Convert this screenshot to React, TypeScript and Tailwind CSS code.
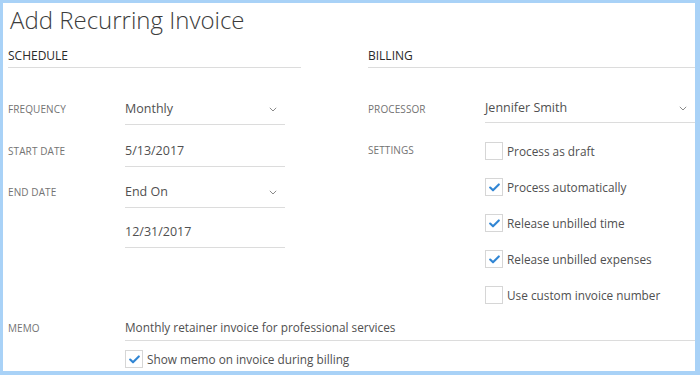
import type { ReactNode } from "react";

function Chevron() {
  return (
    <svg width="8" height="5" viewBox="0 0 8 5" className="shrink-0">
      <path d="M0.8 0.8 L4 4 L7.2 0.8" fill="none" stroke="#8a8a8a" strokeWidth="1" />
    </svg>
  );
}

function Checkbox({ checked, label }: { checked?: boolean; label: string }) {
  return (
    <div className="flex items-center h-[18px]">
      <span className="w-[18px] h-[18px] shrink-0 border border-[#d6d6d6] bg-white grid place-items-center">
        {checked && (
          <svg width="11" height="9" viewBox="0 0 11 9">
            <path d="M1.2 4.6 L4 7.3 L9.8 1.4" fill="none" stroke="#3186d4" strokeWidth="2.1" strokeLinecap="round" strokeLinejoin="round" />
          </svg>
        )}
      </span>
      <span className="ml-[4px] text-[11.8px] text-[#505050] leading-[18px]">{label}</span>
    </div>
  );
}

function Label({ children }: { children: ReactNode }) {
  return <div className="w-[117px] shrink-0 text-[10px] uppercase text-[#737373] tracking-[0.01em]">{children}</div>;
}

function Field({ label, value, select, mt, h = "h-[31px]", width = "w-[160px]" }: { label?: string; value: string; select?: boolean; mt: string; h?: string; width?: string }) {
  return (
    <div className={`flex items-center ${mt}`}>
      <Label>{label}</Label>
      <div className={`${width} ${h} border-b border-[#dcdcdc] flex items-center justify-between pr-[8px]`}>
        <span className="text-[12.5px] text-[#505050]">{value}</span>
        {select && <Chevron />}
      </div>
    </div>
  );
}

function Header({ children }: { children: ReactNode }) {
  return (
    <div className="h-[32px] flex items-end pb-[3px] border-b border-[#dcdcdc]">
      <span className="text-[12px] leading-[16px] font-normal text-[#2a2a2a]">{children}</span>
    </div>
  );
}

export default function App() {
  return (
    <div className="w-[700px] h-[375px] bg-[#a9d2f7] pt-[3px] pl-[3px] pr-[5px] pb-[4px] font-['Open_Sans',sans-serif]">
      <div className="h-full bg-white pl-[5px] flex flex-col">
        <h1 className="pt-[1px] pl-[2px] h-[33px] text-[24px] leading-[32px] font-light text-[#3c3c3c]">Add Recurring Invoice</h1>

        <div className="flex">
          <section className="w-[293px] shrink-0">
            <Header>SCHEDULE</Header>
            <Field label="Frequency" value="Monthly" select mt="mt-[26px]" />
            <Field label="Start Date" value="5/13/2017" mt="mt-[11px]" />
            <Field label="End Date" value="End On" select mt="mt-[10px]" />
            <Field value="12/31/2017" mt="mt-[9px]" />
          </section>

          <section className="ml-[67px] flex-1">
            <Header>BILLING</Header>
            <Field label="Processor" value="Jennifer Smith" select mt="mt-[27px]" h="h-[28px]" width="flex-1" />
            <div className="flex mt-[19px]">
              <Label>
                <div className="leading-[18px] -mt-[1px]">Settings</div>
              </Label>
              <div className="flex flex-col gap-[18px]">
                <Checkbox label="Process as draft" />
                <Checkbox checked label="Process automatically" />
                <Checkbox checked label="Release unbilled time" />
                <Checkbox checked label="Release unbilled expenses" />
                <Checkbox label="Use custom invoice number" />
              </div>
            </div>
          </section>
        </div>

        <div className="flex items-center mt-[11px]">
          <Label>Memo</Label>
          <div className="flex-1 h-[26px] border-b border-[#dcdcdc] flex items-center">
            <span className="text-[11.8px] text-[#505050]">Monthly retainer invoice for professional services</span>
          </div>
        </div>
        <div className="ml-[117px] mt-[9px]">
          <Checkbox checked label="Show memo on invoice during billing" />
        </div>
      </div>
    </div>
  );
}
